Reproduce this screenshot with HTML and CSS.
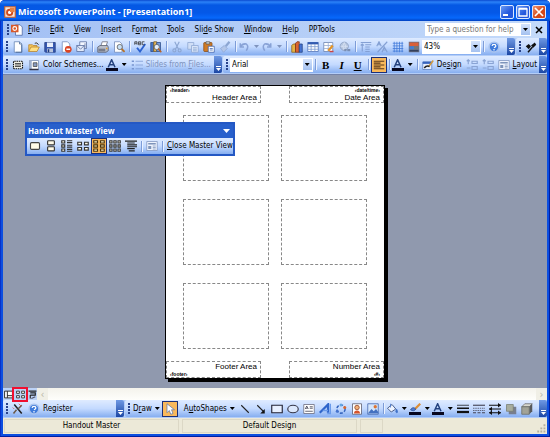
FILE: index.html
```
<!DOCTYPE html>
<html lang="en">
<head>
<meta charset="utf-8">
<title>Microsoft PowerPoint - [Presentation1]</title>
<link rel="stylesheet" href="styles.css">
</head>
<body>
<!-- icon sprite, every symbol is on a 16x16 grid -->
<svg class="sprite" aria-hidden="true">
  <symbol id="app" viewBox="0 0 16 16"><path d="M1 1h14v14H1z" fill="#fbe6d6" stroke="#c8602c" stroke-width="1.5"/><circle cx="7.500" cy="8.500" r="3.500" fill="#fff" stroke="#d04a1c" stroke-width="2.500"/><path d="M8 8V2h6v6z" fill="#e88040"/></symbol>
  <symbol id="doc" viewBox="0 0 16 16"><path d="M6 1h6l3 3v11H6z" fill="#fff" stroke="#4a64a0"/><path d="M0 1h10v10H0z" fill="#d8582a"/><circle cx="5" cy="6" r="2.500" fill="none" stroke="#fff" stroke-width="1.500"/></symbol>
  <symbol id="new" viewBox="0 0 16 16"><path d="M3 1h7l3 3v11H3z" fill="#fff" stroke="#5f7fb0"/><path d="M10 1v3h3M13 5v10H5" fill="none" stroke="#44608f"/></symbol>
  <symbol id="open" viewBox="0 0 16 16"><path d="M1 14V5h5l1 1h5v3" fill="#f7c85c" stroke="#b5822a"/><path d="M1 14l3-6h11l-3 6z" fill="#ffdf83" stroke="#b5822a"/><path d="M9 3q3-2 5 2" fill="none" stroke="#333" stroke-width="1.3"/></symbol>
  <symbol id="save" viewBox="0 0 16 16"><path d="M1 2h14v13H2l-1-1z" fill="#3557b0" stroke="#20397d"/><path d="M4 2h8v6H4z" fill="#e8eefb"/><path d="M4 10h8v5H4z" fill="#b8c4dc"/><path d="M5 11h2v4H5z" fill="#20397d"/></symbol>
  <symbol id="deny" viewBox="0 0 16 16"><path d="M3 1h7l3 3v11H3z" fill="#fff" stroke="#6f87b5"/><circle cx="11" cy="11" r="4.500" fill="#dc4422"/><path d="M8.500 11h5" stroke="#fff" stroke-width="2"/></symbol>
  <symbol id="mail" viewBox="0 0 16 16"><path d="M5 1h9v9H5z" fill="#f4f7ff" stroke="#54699b"/><path d="M1 6h10v8H1z" fill="#e2eafa" stroke="#54699b"/><path d="M1 6l5 5 5-5M12 3v6" fill="none" stroke="#54699b"/></symbol>
  <symbol id="print" viewBox="0 0 16 16"><path d="M5 7l2-6h7l-2 6" fill="#fff" stroke="#667"/><path d="M1 8l3-2h10l1 2v5l-3 2H1z" fill="#b8bdc9" stroke="#555b6b"/><path d="M2 11h9M2 13h9" stroke="#454b5c"/><path d="M12 10h2" stroke="#e6a030" stroke-width="2"/></symbol>
  <symbol id="preview" viewBox="0 0 16 16"><path d="M2 1h7l3 3v11H2z" fill="#fff" stroke="#6f87b5"/><circle cx="9" cy="8" r="3.500" fill="#c8e0f4" stroke="#555"/><path d="M11.500 10.500l4 4" stroke="#b87328" stroke-width="2.500"/></symbol>
  <symbol id="check" viewBox="0 0 16 16"><path d="M4 9l4 5 7-10" fill="none" stroke="#2c62d0" stroke-width="2.500"/><path d="M1 5V1h3v4M1 3h3M6 1h3v4H6zM6 3h3M14 1h-3v4h3" fill="none" stroke="#333"/></symbol>
  <symbol id="research" viewBox="0 0 16 16"><path d="M1 2h4v12H1z" fill="#4774c4" stroke="#284987"/><path d="M5 1h4v13H5z" fill="#e8b858" stroke="#775a22"/><path d="M9 2h5v12H9z" fill="#789ede" stroke="#284987"/><circle cx="9" cy="8" r="3.500" fill="#e4effb" stroke="#555"/><path d="M11 10l4 5" stroke="#b86428" stroke-width="2"/></symbol>
  <symbol id="cut" viewBox="0 0 16 16"><g fill="none" stroke="#8ca6d2" stroke-width="1.500"><path d="M5 1l5 10M11 1L6 11"/><circle cx="4.500" cy="12.500" r="2"/><circle cx="11.500" cy="12.500" r="2"/></g></symbol>
  <symbol id="copy" viewBox="0 0 16 16"><path d="M1 2h8v9H1z" fill="#d0def6" stroke="#8ca6d2"/><path d="M6 6h9v9H6z" fill="#d9e5f9" stroke="#8ca6d2"/><path d="M8 9h5M8 11h5M8 13h5" stroke="#8ca6d2"/></symbol>
  <symbol id="paste" viewBox="0 0 16 16"><rect x="1" y="2" width="11" height="12" rx="1" fill="#d07a24" stroke="#8a4d14"/><path d="M4 1h5v3H4z" fill="#d5d5d5" stroke="#555"/><path d="M7 7h8v8H7z" fill="#fff" stroke="#3a5da8"/><path d="M9 10h4M9 12h4" stroke="#3a5da8"/></symbol>
  <symbol id="brush" viewBox="0 0 16 16"><path d="M14 1l-5 6" stroke="#8ca6d2" stroke-width="3"/><path d="M2 10l5-4 4 4-5 5z" fill="#b3c6e8" stroke="#8ca6d2"/></symbol>
  <symbol id="undo" viewBox="0 0 16 16"><path d="M3 3v5h5M3 8q3-5 8-4 4 3 0 9" fill="none" stroke="#88a2d6" stroke-width="2"/></symbol>
  <symbol id="redo" viewBox="0 0 16 16"><path d="M13 3v5H8M13 8q-3-5-8-4-4 3 0 9" fill="none" stroke="#88a2d6" stroke-width="2"/></symbol>
  <symbol id="chart" viewBox="0 0 16 16"><path d="M1 6l2-2h3v11H1z" fill="#e7b344" stroke="#80601c"/><path d="M6 3l2-2h3v14H6z" fill="#da6432" stroke="#7b3015"/><path d="M11 5l1-1h3v11h-4z" fill="#4774d4" stroke="#23417f"/></symbol>
  <symbol id="table" viewBox="0 0 16 16"><path d="M1 2h14v12H1z" fill="#fff" stroke="#4c6fb4"/><path d="M1 3h14" stroke="#335bb0" stroke-width="3"/><path d="M1 7.500h14M1 11h14M5.500 4v10M10.500 4v10" stroke="#7796cf"/></symbol>
  <symbol id="borders" viewBox="0 0 16 16"><path d="M1 2h12v12H1z" fill="#fff" stroke="#667fae"/><path d="M1 6h12M1 10h12M7 2v12" stroke="#94a8ce"/><path d="M7 13l6-7" stroke="#e39428" stroke-width="3"/><path d="M9 14h5" stroke="#c44" stroke-width="2"/></symbol>
  <symbol id="link" viewBox="0 0 16 16"><circle cx="7" cy="7" r="5.500" fill="#b6c6df" stroke="#8498bc"/><path d="M2 7h10M7 2q-4 5 0 10M7 2q4 5 0 10" fill="none" stroke="#dce6f5"/><path d="M7 12h3m1 0h4" stroke="#7a8eb2" stroke-width="3"/></symbol>
  <symbol id="expand" viewBox="0 0 16 16"><path d="M1 2h14M7 5h8M7 8h6M7 11h6M7 14h6M3 4v10M1 6l2-2 2 2" fill="none" stroke="#84a0d4" stroke-width="1.500"/></symbol>
  <symbol id="showfmt" viewBox="0 0 16 16"><path d="M1 7l3-6 3 6M2 5h4M15 1L2 15M8 15l3-7 4 7M9 12h5" fill="none" stroke="#84a0d4" stroke-width="1.500"/></symbol>
  <symbol id="grid" viewBox="0 0 16 16"><path d="M1 3h14M1 6.500h14M1 10h14M1 13.500h14M3 1v14M6.500 1v14M10 1v14M13.500 1v14" stroke="#3f78d8"/></symbol>
  <symbol id="color" viewBox="0 0 16 16"><path d="M1 1h14v14H1z" fill="#6a6f80"/><path d="M2 2h12v5H2z" fill="#d9603a"/><path d="M2 7h6v4H2z" fill="#417fd2"/><path d="M8 7h6v4H8z" fill="#777"/><path d="M2 12h12v2H2z" fill="#34405c"/></symbol>
  <symbol id="help" viewBox="0 0 16 16"><circle cx="8" cy="8" r="6.500" fill="#3f7bdc" stroke="#a9c3ee" stroke-width="2"/><path d="M5.500 6.500q0-2 2.500-2t2.500 2q0 1-2.500 2.500M8 10.500v2" fill="none" stroke="#fff" stroke-width="1.600"/></symbol>
  <symbol id="dropper" viewBox="0 0 16 16"><path d="M1 7l4-3 3 3-3 4zM8 6l5-4 2 3-4 4z" fill="#111"/><path d="M10 8l-6 7" stroke="#111" stroke-width="2"/></symbol>
  <symbol id="master" viewBox="0 0 16 16"><rect x="2" y="3" width="12" height="10" rx="1" fill="#f3f3ea" stroke="#111" stroke-width="1.500" stroke-dasharray="2 1"/><path d="M4 6h8M4 8h8M4 10h8" stroke="#222"/></symbol>
  <symbol id="slide" viewBox="0 0 16 16"><path d="M2 2h12v12H2z" fill="#fff" stroke="#778db6"/><path d="M2 2h3v12H2z" fill="#9fb0cf"/><path d="M7 5h5v5H7z" fill="#889bc1" stroke="#444"/><path d="M2 14h12" stroke="#334" stroke-width="2"/></symbol>
  <symbol id="acolor" viewBox="0 0 16 16"><path d="M3 11L7.500 1 12 11M5 7.500h5" fill="none" stroke="#24427e" stroke-width="2"/><path d="M0 12h16v4H0z" fill="#080820"/></symbol>
  <symbol id="bullets" viewBox="0 0 16 16"><path d="M1 3h3M1 8h3M1 13h3" stroke="#7895d0" stroke-width="2"/><path d="M6 3h10M6 8h10M6 13h10" stroke="#7895d0"/></symbol>
  <symbol id="align" viewBox="0 0 16 16"><path d="M1 3h14M1 5.500h9M1 8h14M1 10.500h9M1 13h14" stroke="#5a3a1c" stroke-width="1.500"/></symbol>
  <symbol id="design" viewBox="0 0 16 16"><path d="M1 4h12v10H1z" fill="#e9f0ff" stroke="#5a7ebd"/><path d="M1 5h12" stroke="#3764bd" stroke-width="3"/><path d="M15 2l-6 8" stroke="#d29a3c" stroke-width="2"/><path d="M3 12q3-4 7-2" fill="none" stroke="#222" stroke-width="2"/></symbol>
  <symbol id="size" viewBox="0 0 16 16"><path d="M1 3l2-2 2 2M3 1v6M1 12h5M8 3h7v3H8zM8 10h7v4H8z" fill="none" stroke="#8aa4d4" stroke-width="1.500"/></symbol>
  <symbol id="layout" viewBox="0 0 16 16"><path d="M1 2h14v12H1z" fill="#eef3fd" stroke="#7d93bd"/><path d="M3 4h10v2H3zM3 8h4v4H3z" fill="#7e94ba"/><path d="M9 8h4M9 10h4M9 12h4" stroke="#7e94ba"/></symbol>
  <symbol id="h1" viewBox="0 0 16 16"><rect x="2" y="3.500" width="12" height="9" rx="1.500" fill="#fffbe8" stroke="#444" stroke-width="1.500"/></symbol>
  <symbol id="h2" viewBox="0 0 16 16"><g fill="#fffbe8" stroke="#333" stroke-width="1.500"><rect x="3.500" y="1" width="9" height="5.500" rx="1"/><rect x="3.500" y="9" width="9" height="5.500" rx="1"/></g></symbol>
  <symbol id="h3" viewBox="0 0 16 16"><g fill="#fffbe8" stroke="#333" stroke-width="1.500"><path d="M1 1h4v3H1zM1 6.500h4v3H1zM1 12h4v3H1z"/><path d="M8 1h7M8 3.500h7M8 7h7M8 9.500h7M8 12.500h7M8 15h7"/></g></symbol>
  <symbol id="h4" viewBox="0 0 16 16"><g fill="#fffbe8" stroke="#333" stroke-width="1.500"><path d="M1 3h5v3.500H1zM10 3h5v3.500h-5zM1 10h5v3.500H1zM10 10h5v3.500h-5z"/></g></symbol>
  <symbol id="h6" viewBox="0 0 16 16"><g fill="#fff0c0" stroke="#4a340c" stroke-width="1.500"><path d="M1 1h5v3H1zM10 1h5v3h-5zM1 6.500h5v3H1zM10 6.500h5v3h-5zM1 12h5v3H1zM10 12h5v3h-5z"/></g></symbol>
  <symbol id="h9" viewBox="0 0 16 16"><g fill="#fffbe8" stroke="#333" stroke-width="1.500"><path d="M1 1h3v3H1zM6.500 1h3v3h-3zM12 1h3v3h-3zM1 6.500h3v3H1zM6.500 6.500h3v3h-3zM12 6.500h3v3h-3zM1 12h3v3H1zM6.500 12h3v3h-3zM12 12h3v3h-3z"/></g></symbol>
  <symbol id="outline" viewBox="0 0 16 16"><path d="M0 1.500h16M3 4h10M3 6.500h13M3 9h13M3 11.500h10M5 14.500h8" stroke="#222" stroke-width="1.500"/></symbol>
  <symbol id="normal" viewBox="0 0 16 16"><path d="M1 2h14v12H1zM6 2v12M6 10h9" fill="#fff" stroke="#222" stroke-width="1.600"/></symbol>
  <symbol id="sorter" viewBox="0 0 16 16"><path d="M1 2h5v4H1zM10 2h5v4h-5zM1 10h5v4H1zM10 10h5v4h-5z" fill="#fff" stroke="#333" stroke-width="1.600"/></symbol>
  <symbol id="show" viewBox="0 0 16 16"><path d="M1 2h14M4 5h9v4H4M4 9v6" fill="none" stroke="#222" stroke-width="2"/><path d="M6 15l7-3" stroke="#556" stroke-width="2"/></symbol>
  <symbol id="wand" viewBox="0 0 16 16"><path d="M3 2l10 12" stroke="#222" stroke-width="2"/><path d="M13 3L8 8M2 14l4-5" stroke="#6b5a4a" stroke-width="2"/><path d="M9 1l3 3M1 6l2 2" stroke="#d6483a"/></symbol>
  <symbol id="pointer" viewBox="0 0 16 16"><path d="M4 1v12l3-3 2 5 3-1-2-5h4z" fill="#fff" stroke="#6078a8"/></symbol>
  <symbol id="line" viewBox="0 0 16 16"><path d="M3 3l10 10" stroke="#222" stroke-width="1.500"/></symbol>
  <symbol id="arrow" viewBox="0 0 16 16"><path d="M3 3l8 8" stroke="#222" stroke-width="1.500"/><path d="M13 8v6H7z" fill="#111"/></symbol>
  <symbol id="rect" viewBox="0 0 16 16"><path d="M1 3h14v10H1z" fill="#e8f0ff" stroke="#223" stroke-width="1.500"/></symbol>
  <symbol id="oval" viewBox="0 0 16 16"><ellipse cx="8" cy="8" rx="7" ry="5" fill="#dce8fc" stroke="#334" stroke-width="1.500"/></symbol>
  <symbol id="textbox" viewBox="0 0 16 16"><path d="M1 2h14v12H1z" fill="#fff" stroke="#667"/><path d="M3 8l2-4 2 4M4 7h2M9 5h4M9 7h4M3 11h10" fill="none" stroke="#334"/></symbol>
  <symbol id="wordart" viewBox="0 0 16 16"><path d="M1 13L12 2v11" fill="none" stroke="#2f65ca" stroke-width="3"/><path d="M5 10h7M15 1v13h-4" fill="none" stroke="#6b9bea" stroke-width="2"/></symbol>
  <symbol id="cycle" viewBox="0 0 16 16"><circle cx="8" cy="8" r="5.500" fill="none" stroke="#3464bd" stroke-width="2" stroke-dasharray="4 2"/><circle cx="8" cy="2.500" r="2" fill="#63a6e2"/><circle cx="13" cy="6" r="2" fill="#d9672d"/><circle cx="3" cy="11" r="2" fill="#4573cd"/></symbol>
  <symbol id="clip" viewBox="0 0 16 16"><path d="M2 1h12v14H2z" fill="#fff" stroke="#556"/><circle cx="8" cy="6" r="3" fill="#f0b078" stroke="#8b3c20"/><path d="M4 14q0-4 4-4t4 4z" fill="#d6542c"/></symbol>
  <symbol id="picture" viewBox="0 0 16 16"><path d="M1 1h14v14H1z" fill="#d4e6fc" stroke="#3d62a8"/><path d="M1 14l5-6 3 3 3-3 3 4v2z" fill="#4471c0"/><circle cx="11" cy="5" r="2.200" fill="#dd7431"/></symbol>
  <symbol id="bucket" viewBox="0 0 16 16"><path d="M2 7l6-5 5 6-6 4z" fill="#eef4ff" stroke="#4a5f8c" stroke-width="1.300"/><path d="M6 1v5M14 8q3 5 0 5-2-1 0-5" fill="#4072c8" stroke="#4072c8"/></symbol>
  <symbol id="linecolor" viewBox="0 0 16 16"><path d="M15 1L8 8" stroke="#dc8d35" stroke-width="3"/><path d="M2 9q3-5 7-1-2 4-7 1" fill="#4e7dd6" stroke="#28498e"/><path d="M0 12h16v4H0z" fill="#080820"/></symbol>
  <symbol id="weights" viewBox="0 0 16 16"><path d="M0 3h16" stroke="#111"/><path d="M0 7h16" stroke="#111" stroke-width="2"/><path d="M0 12h16" stroke="#111" stroke-width="3"/></symbol>
  <symbol id="dashes" viewBox="0 0 16 16"><path d="M0 3h16" stroke="#445" stroke-width="1.500"/><path d="M0 7h16M0 10h16" stroke="#445" stroke-dasharray="2 1"/><path d="M0 13h16" stroke="#445" stroke-width="1.500" stroke-dasharray="4 2"/></symbol>
  <symbol id="arrows" viewBox="0 0 16 16"><path d="M0 3h16M0 8h16M0 13h16" stroke="#111" stroke-width="1.500"/><path d="M12 0l4 3-4 3zM4 5L0 8l4 3zM12 10l4 3-4 3zM4 10l-4 3 4 3z" fill="#111"/></symbol>
  <symbol id="shadow" viewBox="0 0 16 16"><path d="M5 5h10v10H5z" fill="#777e8e"/><path d="M2 2h9v9H2z" fill="#a8ad9e" stroke="#777d70"/></symbol>
  <symbol id="cube" viewBox="0 0 16 16"><path d="M1 5l4-4h10l-4 4z" fill="#d8d8ce" stroke="#666"/><path d="M11 5l4-4v10l-4 4z" fill="#57595c"/><path d="M1 5h10v10H1z" fill="#a2a397" stroke="#686960"/></symbol>
  <symbol id="resize" viewBox="0 0 16 16"><path d="M12 2h3v3h-3zM7 7h3v3H7zM12 7h3v3h-3zM2 12h3v3H2zM7 12h3v3H7zM12 12h3v3h-3z" fill="#b5b19d"/></symbol>
</svg>

<div class="window">
  <header class="titlebar">
    <svg class="icon"><use href="#app"/></svg>
    <h1>Microsoft PowerPoint - [Presentation1]</h1>
    <button class="winbtn" aria-label="Minimize"><svg viewBox="0 0 12 12"><path d="M2 9h5" stroke="#fff" stroke-width="2"/></svg></button>
    <button class="winbtn" aria-label="Maximize"><svg viewBox="0 0 12 12"><path d="M2 3h8v7H2zM2 2.500h8" fill="none" stroke="#fff" stroke-width="1.300"/></svg></button>
    <button class="winbtn close" aria-label="Close"><svg viewBox="0 0 12 12"><path d="M2 2l8 8M10 2l-8 8" stroke="#fff" stroke-width="1.700"/></svg></button>
  </header>

  <nav class="menubar">
    <i class="grip"></i>
    <svg class="icon"><use href="#doc"/></svg>
    <button><u>F</u>ile</button>
    <button><u>E</u>dit</button>
    <button><u>V</u>iew</button>
    <button><u>I</u>nsert</button>
    <button>F<u>o</u>rmat</button>
    <button><u>T</u>ools</button>
    <button>Sli<u>d</u>e Show</button>
    <button><u>W</u>indow</button>
    <button><u>H</u>elp</button>
    <button>PPTools</button>
    <div class="ask">
      <input type="text" aria-label="Help question" placeholder="Type a question for help">
      <i class="caret"></i>
    </div>
    <button class="close-doc" aria-label="Close document"><svg viewBox="0 0 8 8"><path d="M1 1l6 6M7 1L1 7" stroke="#000" stroke-width="1.500"/></svg></button>
  </nav>

  <div class="bars">
    <div class="toolbar fill">
      <i class="grip"></i>
      <button class="tool" aria-label="New"><svg class="icon"><use href="#new"/></svg></button>
      <button class="tool" aria-label="Open"><svg class="icon"><use href="#open"/></svg></button>
      <button class="tool" aria-label="Save"><svg class="icon"><use href="#save"/></svg></button>
      <button class="tool" aria-label="Permission"><svg class="icon"><use href="#deny"/></svg></button>
      <button class="tool" aria-label="E-mail"><svg class="icon"><use href="#mail"/></svg></button>
      <i class="sep"></i>
      <button class="tool" aria-label="Print"><svg class="icon"><use href="#print"/></svg></button>
      <button class="tool" aria-label="Print preview"><svg class="icon"><use href="#preview"/></svg></button>
      <i class="sep"></i>
      <button class="tool" aria-label="Spelling"><svg class="icon"><use href="#check"/></svg></button>
      <button class="tool" aria-label="Research"><svg class="icon"><use href="#research"/></svg></button>
      <i class="sep"></i>
      <button class="tool" aria-label="Cut"><svg class="icon"><use href="#cut"/></svg></button>
      <button class="tool" aria-label="Copy"><svg class="icon"><use href="#copy"/></svg></button>
      <button class="tool" aria-label="Paste"><svg class="icon"><use href="#paste"/></svg></button>
      <button class="tool" aria-label="Format painter"><svg class="icon"><use href="#brush"/></svg></button>
      <i class="sep"></i>
      <button class="tool drop off" aria-label="Undo"><svg class="icon"><use href="#undo"/></svg></button>
      <button class="tool drop off" aria-label="Redo"><svg class="icon"><use href="#redo"/></svg></button>
      <i class="sep"></i>
      <button class="tool" aria-label="Insert chart"><svg class="icon"><use href="#chart"/></svg></button>
      <button class="tool" aria-label="Insert table"><svg class="icon"><use href="#table"/></svg></button>
      <button class="tool" aria-label="Tables and borders"><svg class="icon"><use href="#borders"/></svg></button>
      <button class="tool" aria-label="Insert hyperlink"><svg class="icon"><use href="#link"/></svg></button>
      <i class="sep"></i>
      <button class="tool" aria-label="Expand all"><svg class="icon"><use href="#expand"/></svg></button>
      <button class="tool" aria-label="Show formatting"><svg class="icon"><use href="#showfmt"/></svg></button>
      <button class="tool" aria-label="Show grid"><svg class="icon"><use href="#grid"/></svg></button>
      <button class="tool" aria-label="Color or grayscale"><svg class="icon"><use href="#color"/></svg></button>
      <div class="combo grow">
        <select aria-label="Zoom"><option>43%</option></select>
        <i class="caret"></i>
      </div>
      <i class="sep"></i>
      <button class="tool" aria-label="Help"><svg class="icon"><use href="#help"/></svg></button>
      <button class="more wide-gap" aria-label="Toolbar options"></button>
    </div>
    <div class="toolbar">
      <i class="grip"></i>
      <button class="tool" aria-label="Pick up style"><svg class="icon"><use href="#dropper"/></svg></button>
      <button class="more" aria-label="Toolbar options"></button>
    </div>
  </div>

  <div class="bars">
    <div class="toolbar view-bar">
      <i class="grip"></i>
      <button class="tool" aria-label="Master layout"><svg class="icon"><use href="#master"/></svg></button>
      <button class="tool label"><svg class="icon"><use href="#slide"/></svg>Color Schemes...</button>
      <button class="tool drop" aria-label="Font color"><svg class="icon"><use href="#acolor"/></svg></button>
      <button class="tool label off"><svg class="icon"><use href="#bullets"/></svg><span>Slides from <u>F</u>iles...</span></button>
      <button class="more" aria-label="Toolbar options"></button>
    </div>
    <div class="toolbar fill">
      <i class="grip"></i>
      <div class="combo grow">
        <select aria-label="Font"><option>Arial</option></select>
        <i class="caret"></i>
      </div>
      <i class="sep"></i>
      <button class="tool letter bold">B</button>
      <button class="tool letter italic">I</button>
      <button class="tool letter under">U</button>
      <i class="sep"></i>
      <button class="tool on" aria-label="Align left"><svg class="icon"><use href="#align"/></svg></button>
      <i class="sep"></i>
      <button class="tool drop" aria-label="Font color"><svg class="icon"><use href="#acolor"/></svg></button>
      <i class="sep"></i>
      <button class="tool label"><svg class="icon"><use href="#design"/></svg><span>De<u>s</u>ign</span></button>
      <button class="tool" aria-label="Increase font size"><svg class="icon"><use href="#size"/></svg></button>
      <button class="tool" aria-label="Decrease font size"><svg class="icon"><use href="#size"/></svg></button>
      <button class="tool label"><svg class="icon"><use href="#layout"/></svg><span><u>L</u>ayout</span></button>
      <button class="more" aria-label="Toolbar options"></button>
    </div>
  </div>

  <main class="canvas">
    <div class="page">
      <div class="row">
        <div class="area"><small>‹header›</small><span>Header Area</span></div>
        <div class="area right"><small>‹date/time›</small><span>Date Area</span></div>
      </div>
      <div class="slides">
        <div></div><div></div>
        <div></div><div></div>
        <div></div><div></div>
      </div>
      <div class="row">
        <div class="area"><span>Footer Area</span><small>‹footer›</small></div>
        <div class="area right"><span>Number Area</span><small>‹#›</small></div>
      </div>
    </div>

    <section class="floating">
      <h2>Handout Master View <i class="caret"></i></h2>
      <div class="toolbar">
        <button class="tool" aria-label="1 slide"><svg class="icon"><use href="#h1"/></svg></button>
        <button class="tool" aria-label="2 slides"><svg class="icon"><use href="#h2"/></svg></button>
        <button class="tool" aria-label="3 slides"><svg class="icon"><use href="#h3"/></svg></button>
        <button class="tool" aria-label="4 slides"><svg class="icon"><use href="#h4"/></svg></button>
        <button class="tool on" aria-label="6 slides"><svg class="icon"><use href="#h6"/></svg></button>
        <button class="tool" aria-label="9 slides"><svg class="icon"><use href="#h9"/></svg></button>
        <button class="tool" aria-label="Outline"><svg class="icon"><use href="#outline"/></svg></button>
        <i class="sep"></i>
        <button class="tool" aria-label="Handout layout"><svg class="icon"><use href="#layout"/></svg></button>
        <i class="sep"></i>
        <button class="tool label"><span><u>C</u>lose Master View</span></button>
      </div>
    </section>
  </main>

  <div class="viewrow">
    <button aria-label="Normal view"><svg class="icon"><use href="#normal"/></svg></button>
    <button class="marked" aria-label="Slide sorter view"><svg class="icon"><use href="#sorter"/></svg></button>
    <button aria-label="Slide show"><svg class="icon"><use href="#show"/></svg></button>
    <div class="scroll">
      <button aria-label="Scroll left">‹</button>
      <button aria-label="Scroll right">›</button>
    </div>
  </div>

  <div class="bars">
    <div class="toolbar register-bar">
      <i class="grip"></i>
      <button class="tool" aria-label="Wizard"><svg class="icon"><use href="#wand"/></svg></button>
      <button class="tool label"><svg class="icon"><use href="#help"/></svg>Register</button>
      <button class="more" aria-label="Toolbar options"></button>
    </div>
    <div class="toolbar fill">
      <i class="grip"></i>
      <button class="tool label drop"><span>D<u>r</u>aw</span></button>
      <button class="tool on" aria-label="Select objects"><svg class="icon"><use href="#pointer"/></svg></button>
      <i class="sep none"></i>
      <button class="tool label drop"><span>A<u>u</u>toShapes</span></button>
      <button class="tool" aria-label="Line"><svg class="icon"><use href="#line"/></svg></button>
      <button class="tool" aria-label="Arrow"><svg class="icon"><use href="#arrow"/></svg></button>
      <button class="tool" aria-label="Rectangle"><svg class="icon"><use href="#rect"/></svg></button>
      <button class="tool" aria-label="Oval"><svg class="icon"><use href="#oval"/></svg></button>
      <button class="tool" aria-label="Text box"><svg class="icon"><use href="#textbox"/></svg></button>
      <button class="tool" aria-label="WordArt"><svg class="icon"><use href="#wordart"/></svg></button>
      <button class="tool" aria-label="Diagram"><svg class="icon"><use href="#cycle"/></svg></button>
      <button class="tool" aria-label="Clip art"><svg class="icon"><use href="#clip"/></svg></button>
      <button class="tool" aria-label="Picture"><svg class="icon"><use href="#picture"/></svg></button>
      <i class="sep"></i>
      <button class="tool drop" aria-label="Fill color"><svg class="icon"><use href="#bucket"/></svg></button>
      <button class="tool drop" aria-label="Line color"><svg class="icon"><use href="#linecolor"/></svg></button>
      <button class="tool drop" aria-label="Font color"><svg class="icon"><use href="#acolor"/></svg></button>
      <button class="tool" aria-label="Line style"><svg class="icon"><use href="#weights"/></svg></button>
      <button class="tool" aria-label="Dash style"><svg class="icon"><use href="#dashes"/></svg></button>
      <button class="tool" aria-label="Arrow style"><svg class="icon"><use href="#arrows"/></svg></button>
      <button class="tool" aria-label="Shadow style"><svg class="icon"><use href="#shadow"/></svg></button>
      <button class="tool" aria-label="3-D style"><svg class="icon"><use href="#cube"/></svg></button>
      <button class="more" aria-label="Toolbar options"></button>
    </div>
  </div>

  <footer class="status">
    <span>Handout Master</span>
    <span>Default Design</span>
    <span class="small"></span>
    <svg class="icon resize"><use href="#resize"/></svg>
  </footer>
</div>
</body>
</html>
```
FILE: styles.css
```
* {
  box-sizing: border-box;
}
body {
  margin: 0;
  background: #fff;
  font-family: "DejaVu Sans Condensed", "Open Sans", sans-serif;
  font-size: 8px;
  line-height: 12px;
  color: #000;
}
button, input, select {
  margin: 0;
  padding: 0;
  border: 0;
  background: none;
  font: inherit;
  color: inherit;
  white-space: nowrap;
}
.sprite {
  display: none;
}
.icon {
  display: block;
  flex: none;
  width: 12px;
  height: 12px;
}
.window {
  display: flex;
  flex-direction: column;
  height: 100vh;
  padding: 0 3px 3px;
  border-radius: 5px 5px 0 0;
  background: #0c4ee0;
  box-shadow: inset -1px -1px #001ea0, inset 1px 0 #0831c8;
}

/* title */
.titlebar {
  display: flex;
  align-items: center;
  gap: 2px;
  height: 21px;
  margin: 0 -3px;
  padding: 2px 4px 0;
  border-radius: 5px 5px 0 0;
  background: linear-gradient(#0a4ad0, #2b82f8 2px, #0458e4 5px, #0458e8 13px, #0668fc 18px, #0040c0);
}
.titlebar h1 {
  flex: 1;
  margin: 0;
  font-family: "Open Sans", sans-serif;
  font-size: 9px;
  font-weight: bold;
  color: #fff;
}
.winbtn {
  width: 14px;
  height: 14px;
  border: 1px solid #dce8ff;
  border-radius: 2px;
  background: linear-gradient(135deg, #6a9cf6, #2458dc 60%);
}
.winbtn svg {
  display: block;
}
.winbtn.close {
  background: linear-gradient(135deg, #f0916c, #d44818 60%);
}

/* menu */
.menubar {
  display: flex;
  align-items: center;
  gap: 10px;
  height: 17px;
  padding: 0 4px 0 1px;
  background: linear-gradient(90deg, #a3c0f4, #c4dafa);
}
.menubar .icon {
  margin-left: -10px;
}
.menubar .icon + button {
  margin-left: -5px;
}
.menubar .close-doc {
  width: 8px;
  height: 8px;
  margin-left: -6px;
}
.close-doc svg {
  display: block;
}
.ask {
  display: flex;
  align-items: center;
  width: 106px;
  height: 13px;
  margin-left: auto;
  background: #fff;
}
.ask input {
  flex: 1;
  min-width: 0;
  padding-left: 2px;
}
.ask input::placeholder {
  color: #777;
  opacity: 1;
}
.caret {
  flex: none;
  width: 5px;
  height: 3px;
  background: #000;
  clip-path: polygon(0 0, 100% 0, 50% 100%);
}
.ask .caret, .combo .caret {
  width: 9px;
  height: 11px;
  margin-right: 1px;
  background: linear-gradient(#d4e3fc, #a4c1f0);
  clip-path: none;
}
.ask .caret::after, .combo .caret::after {
  content: "";
  display: block;
  width: 5px;
  height: 3px;
  margin: 4px 2px;
  background: #000;
  clip-path: polygon(0 0, 100% 0, 50% 100%);
}

/* toolbars */
.bars {
  display: flex;
  gap: 1px;
  background: #b3cdf8;
  padding-bottom: 1px;
}
.toolbar {
  display: flex;
  align-items: center;
  height: 17px;
  border-radius: 2px;
  background: linear-gradient(#dfebff, #c4daff 50%, #86aef0);
}
.fill {
  flex: 1;
  min-width: 0;
}
.view-bar {
  width: 219px;
}
.register-bar {
  width: 121px;
}
.grip {
  flex: none;
  width: 2px;
  height: 11px;
  margin: 0 2px 0 3px;
  background: repeating-linear-gradient(#27418a 0 2px, transparent 2px 3px);
}
.tool {
  display: flex;
  flex: none;
  align-items: center;
  justify-content: center;
  min-width: 16px;
  height: 16px;
}
.tool.label {
  gap: 3px;
  padding: 0 2px;
}
.tool.drop::after {
  content: "";
  width: 5px;
  height: 3px;
  margin: 0 2px 0 4px;
  background: #000;
  clip-path: polygon(0 0, 100% 0, 50% 100%);
}
.tool.label.drop {
  padding: 0 2px 0 1px;
}
.tool.label.drop::after {
  margin: 0;
}
.tool.off {
  color: #7f93bd;
}
.tool.drop.off::after {
  background: #7f93bd;
}
.tool.on {
  border: 1px solid #1c3078;
  background: #f9b95c;
}
.letter {
  font-family: "Liberation Serif", serif;
  font-size: 11px;
  font-weight: bold;
}
.italic {
  font-style: italic;
}
.under {
  text-decoration: underline;
}
.sep {
  flex: none;
  width: 1px;
  height: 11px;
  margin: 0 2px;
  background: #7d9cd8;
  box-shadow: 1px 0 #eaf2ff;
}
.sep.none {
  visibility: hidden;
}
.more {
  position: relative;
  flex: none;
  width: 8px;
  height: 17px;
  margin-left: auto;
  border-radius: 0 2px 2px 0;
  background: linear-gradient(#6f99e4, #1c47a4);
}
.more::before {
  content: "";
  position: absolute;
  left: 2px;
  bottom: 6px;
  width: 5px;
  height: 1px;
  background: #fff;
}
.more::after {
  content: "";
  position: absolute;
  left: 2px;
  bottom: 2px;
  width: 5px;
  height: 3px;
  background: #fff;
  clip-path: polygon(0 0, 100% 0, 50% 100%);
}
.wide-gap {
  margin-left: 5px;
}
.combo {
  display: flex;
  align-items: center;
  height: 14px;
  background: #fff;
}
.combo select {
  flex: 1;
  min-width: 0;
  padding-left: 2px;
  appearance: none;
}
.grow {
  flex: 1;
  min-width: 0;
}

/* work area */
.canvas {
  position: relative;
  display: flex;
  flex: 1;
  align-items: flex-start;
  justify-content: center;
  padding-top: 10px;
  border-top: 1px solid #7482a8;
  background: #9099ae;
}
.page {
  width: 220px;
  border: 1px solid #000;
  background: #fff;
  box-shadow: 3px 3px #000;
}
.row {
  display: flex;
  justify-content: space-between;
}
.area {
  display: flex;
  flex-direction: column;
  width: 95px;
  height: 17px;
  padding: 0 3px;
  border: 1px dashed #888;
  text-align: right;
}
.area span, .area small {
  font-family: "Liberation Sans", sans-serif;
  line-height: 9px;
}
.area small {
  font-size: 5px;
  font-weight: bold;
  line-height: 6px;
  text-align: left;
}
.area.right small {
  text-align: right;
}
.slides {
  display: grid;
  grid-template-columns: 1fr 1fr;
  gap: 18px 12px;
  padding: 12px 17px;
}
.slides div {
  height: 66px;
  border: 1px dashed #888;
}
.floating {
  position: absolute;
  left: 22px;
  top: 47px;
  width: 210px;
  border: 2px solid #2458c4;
}
.floating h2 {
  display: flex;
  align-items: center;
  justify-content: space-between;
  height: 14px;
  margin: 0;
  padding: 0 3px 0 1px;
  background: #2860cc;
  font-family: "Open Sans", sans-serif;
  font-size: 8px;
  color: #fff;
}
.floating h2 .caret {
  width: 7px;
  height: 4px;
  background: #fff;
}
.floating .toolbar {
  height: 16px;
  border-radius: 0;
}

/* view buttons and scroll bar */
.viewrow {
  display: flex;
  align-items: center;
  height: 12px;
  background: #f0eee4;
}
.viewrow > button {
  display: flex;
  align-items: center;
  justify-content: center;
  width: 10px;
  height: 12px;
  background: #bcd2f6;
}
.viewrow .icon {
  width: 9px;
  height: 9px;
}
.viewrow .marked {
  z-index: 1;
  width: 14px;
  height: 13px;
  border: 1px solid #f01030;
  box-shadow: 0 0 0 1px #f01030;
}
.scroll {
  display: flex;
  flex: 1;
  justify-content: space-between;
  height: 12px;
  background: linear-gradient(#f4f3ec, #fefefb);
}
.scroll button {
  width: 11px;
  background: #f0efe6;
  color: #b8b6a8;
  font-size: 11px;
  line-height: 9px;
}

/* status */
.status {
  display: flex;
  gap: 3px;
  height: 16px;
  padding: 1px;
  background: #ece9d8;
}
.status span {
  width: 175px;
  border: 1px solid #dcd8c6;
  text-align: center;
}
.status .small {
  width: 23px;
}
.status .resize {
  align-self: flex-end;
  width: 10px;
  height: 10px;
  margin-left: auto;
}
```
